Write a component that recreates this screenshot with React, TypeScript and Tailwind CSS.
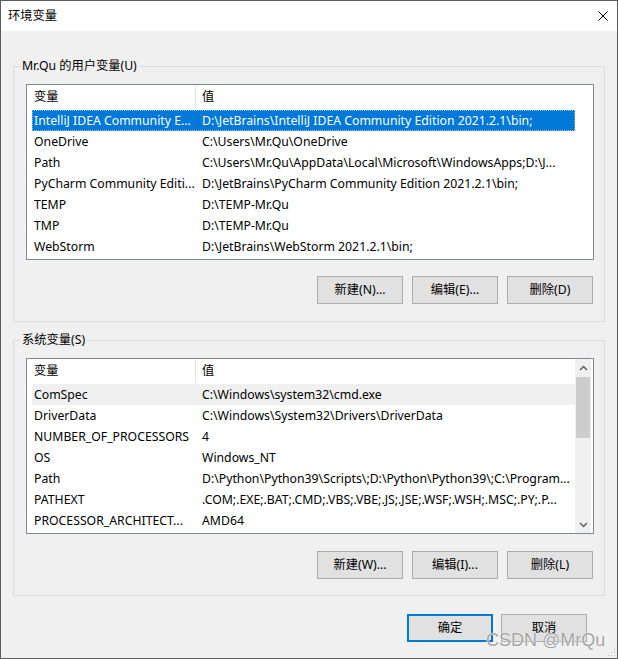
import React from 'react';

type Row = [string, string];

const userVars: Row[] = [
  ['IntelliJ IDEA Community E...', 'D:\\JetBrains\\IntelliJ IDEA Community Edition 2021.2.1\\bin;'],
  ['OneDrive', 'C:\\Users\\Mr.Qu\\OneDrive'],
  ['Path', 'C:\\Users\\Mr.Qu\\AppData\\Local\\Microsoft\\WindowsApps;D:\\J...'],
  ['PyCharm Community Editi...', 'D:\\JetBrains\\PyCharm Community Edition 2021.2.1\\bin;'],
  ['TEMP', 'D:\\TEMP-Mr.Qu'],
  ['TMP', 'D:\\TEMP-Mr.Qu'],
  ['WebStorm', 'D:\\JetBrains\\WebStorm 2021.2.1\\bin;'],
];

const sysVars: Row[] = [
  ['ComSpec', 'C:\\Windows\\system32\\cmd.exe'],
  ['DriverData', 'C:\\Windows\\System32\\Drivers\\DriverData'],
  ['NUMBER_OF_PROCESSORS', '4'],
  ['OS', 'Windows_NT'],
  ['Path', 'D:\\Python\\Python39\\Scripts\\;D:\\Python\\Python39\\;C:\\Program...'],
  ['PATHEXT', '.COM;.EXE;.BAT;.CMD;.VBS;.VBE;.JS;.JSE;.WSF;.WSH;.MSC;.PY;.P...'],
  ['PROCESSOR_ARCHITECT...', 'AMD64'],
];

const Chevron = ({ down }: { down?: boolean }) => (
  <svg width="9" height="6" viewBox="0 0 9 6">
    <path d={down ? 'M1 1 L4.5 4.5 L8 1' : 'M1 5 L4.5 1.5 L8 5'} fill="none" stroke="#606060" strokeWidth="1.5" />
  </svg>
);

const Scrollbar = () => (
  <div className="flex w-[16px] flex-col bg-[#f0f0f0]">
    <div className="flex h-[17px] items-center justify-center"><Chevron /></div>
    <div className="mx-[1px] mt-[1px] h-[61px] bg-[#cdcdcd]" />
    <div className="flex-1" />
    <div className="flex h-[17px] items-center justify-center"><Chevron down /></div>
  </div>
);

const ListView = ({ rows, selected, focused, scroll }: { rows: Row[]; selected: number; focused?: boolean; scroll?: boolean }) => (
  <div className="flex h-[176px] border border-[#828790] bg-white pl-[5px] pr-[2px]">
    <div className="flex w-[543px] flex-col">
      <div className="flex h-[25px] items-center">
        <div className="flex h-[23px] w-[164px] items-center border-r border-[#e5e5e5] pl-[2px]">变量</div>
        <div className="pl-[6px]">值</div>
      </div>
      {rows.map(([name, value], i) => {
        const sel = i === selected;
        const cls = sel
          ? focused
            ? 'bg-[#0078d7] text-white outline outline-1 outline-dotted outline-[#8cc3ee] -outline-offset-1'
            : 'bg-[#f0f0f0]'
          : '';
        return (
          <div key={name + i} className={`flex h-[21px] items-center whitespace-nowrap pt-[1px] ${cls}`}>
            <div className="w-[164px] shrink-0 pl-[2px]">{name}</div>
            <div className="pl-[6px]">{value}</div>
          </div>
        );
      })}
    </div>
    {scroll ? <Scrollbar /> : <div className="w-[16px]" />}
  </div>
);

const Btn = ({ children, primary }: { children: React.ReactNode; primary?: boolean }) => (
  <button
    className={`flex h-[28px] w-[86px] items-center justify-center bg-[#e1e1e1] ${
      primary ? 'border-2 border-[#0078d7]' : 'border border-[#adadad]'
    }`}
  >
    {children}
  </button>
);

const GroupBox = ({ label, className, children }: { label: string; className?: string; children: React.ReactNode }) => (
  <div className={`relative mx-[12px] border border-[#dcdcdc] pl-[12px] pr-[10px] pt-[17px] ${className || ''}`}>
    <span className="absolute -top-[9px] left-[6px] bg-[#f0f0f0] px-[2px] leading-[16px]">{label}</span>
    {children}
  </div>
);

export default function App() {
  return (
    <div className="relative flex h-[659px] w-[618px] flex-col overflow-hidden border border-[#5c5c5c] bg-[#f0f0f0] text-[12.25px] text-black [font-family:'Noto_Sans','Noto_Sans_CJK_SC',sans-serif]">
      {/* title bar */}
      <div className="flex h-[30px] shrink-0 items-center justify-between bg-white pl-[7px] pr-[9px]">
        <span>环境变量</span>
        <svg width="10" height="10" viewBox="0 0 10 10">
          <path d="M0.5 0.5 L9.5 9.5 M9.5 0.5 L0.5 9.5" stroke="#000" strokeWidth="1" />
        </svg>
      </div>

      <GroupBox label="Mr.Qu 的用户变量(U)" className="mt-[35px] pb-[17px]">
        <ListView rows={userVars} selected={0} focused />
        <div className="mr-[1px] mt-[16px] flex justify-end gap-[9px]">
          <Btn>新建(N)...</Btn>
          <Btn>编辑(E)...</Btn>
          <Btn>删除(D)</Btn>
        </div>
      </GroupBox>

      <GroupBox label="系统变量(S)" className="mt-[18px] pb-[16px]">
        <ListView rows={sysVars} selected={0} scroll />
        <div className="mr-[1px] mt-[17px] flex justify-end gap-[9px]">
          <Btn>新建(W)...</Btn>
          <Btn>编辑(I)...</Btn>
          <Btn>删除(L)</Btn>
        </div>
      </GroupBox>

      <div className="mt-[18px] flex justify-end gap-[8px] pr-[30px]">
        <Btn primary>确定</Btn>
        <Btn>取消</Btn>
      </div>

      {/* watermark */}
      <span className="absolute left-[485px] top-[626px] text-[18px] text-[#8c8c8c]/80 [font-family:'Liberation_Sans',sans-serif] [text-shadow:0_0_1px_#fff,0_0_1px_#fff]">
        CSDN @MrQu
      </span>

      {/* resize grip */}
      <svg className="absolute bottom-[1px] right-[1px]" width="10" height="10" viewBox="0 0 10 10">
        <g fill="#b8b8b8">
          <rect x="8" y="2" width="1" height="1" />
          <rect x="5" y="5" width="1" height="1" />
          <rect x="8" y="5" width="1" height="1" />
          <rect x="2" y="8" width="1" height="1" />
          <rect x="5" y="8" width="1" height="1" />
          <rect x="8" y="8" width="1" height="1" />
        </g>
      </svg>
    </div>
  );
}
